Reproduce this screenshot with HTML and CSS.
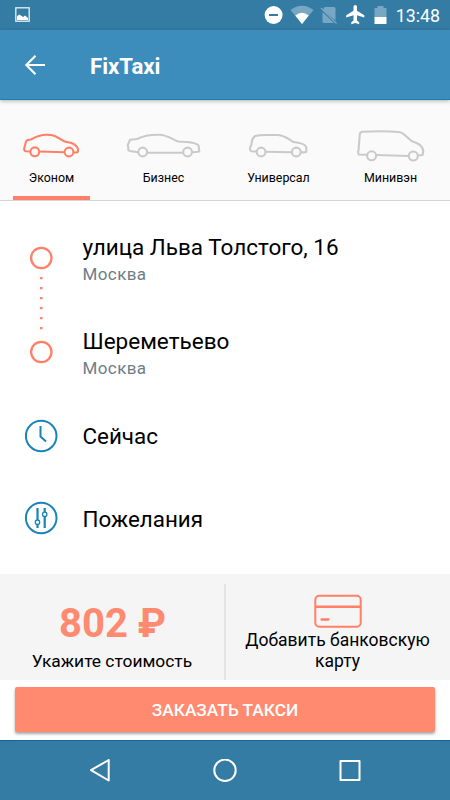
FILE: index.html
```html
<!DOCTYPE html>
<html lang="ru">
<head>
<meta charset="utf-8">
<title>FixTaxi</title>
<link rel="stylesheet" href="styles.css">
</head>
<body>
<div class="screen">
  <div class="status">
    <svg class="status-picture" viewBox="0 0 16 16"><rect x=".8" y=".8" width="13.4" height="13.4" fill="none" stroke="#e8f1f6" stroke-width="1.3"/><path d="M2 13V9.5L4 7.5L6 8.5L8 10L10 8.5L13 11V13Z" fill="#fff"/></svg>
    <svg class="status-icons" viewBox="262 0 128 30">
      <circle cx="273.6" cy="15" r="9" fill="#fff"/><path d="M269 15H278" stroke="#357ca5" stroke-width="2"/>
      <path d="M290.5 10Q302 1.500 313.500 10L302 24Z" fill="#78a7c3"/><path d="M295.300 15.500Q302 10 308.700 15.500L302 24Z" fill="#fff"/>
      <path d="M324.500 7H334Q335.500 7 335.500 8.500V20.500L323 10ZM322.500 12L334 23H324Q322.500 23 322.500 21.500Z" fill="#78a7c3"/><path d="M321 8L336.500 23.500" stroke="#78a7c3" stroke-width="1.300"/>
      <path d="M364.300 17.500V15.300L357 10.700V6.800A1.700 1.700 0 0 0 353.500 6.800V10.700L346.200 15.300V17.500L353.500 15.200V20.500L351.300 22.300V24.200L355.200 23L359.200 24.200V22.300L357 20.500V15.200Z" fill="#fff"/>
      <path d="M374.500 8H377.500V6H383.500V8H386.500V17H374.500Z" fill="#78a7c3"/><path d="M374.500 17H386.500V24H374.500Z" fill="#fff"/>
    </svg>
    <span class="time">13:48</span>
  </div>
  <header class="header">
    <svg class="back" viewBox="0 0 24 24"><path d="M22 12H3.500M12.500 2.800L3.300 12L12.500 21.200" fill="none" stroke="#fff" stroke-width="2.100"/></svg>
    <h1 class="title">FixTaxi</h1>
  </header>
  <nav class="tabs">
    <div class="tab tab-active">
      <svg class="car car-economy" viewBox="21 125 61 40"><path d="M30.300 151.500L26 151.300Q23.800 151 24.200 148.500L26 141.500Q26.500 139.700 31 139.500C36 136.500 40 134.600 47 134.700C54 134.700 57 137 63.500 141Q66 142 70.500 142.800Q76.500 144.500 78 149V151.500L77 152.500H73.300M39.300 151.500L64.500 152.200"/><circle cx="34.800" cy="151.800" r="4.400"/><circle cx="69" cy="152" r="4.400"/></svg>
      <span>Эконом</span>
    </div>
    <div class="tab">
      <svg class="car car-business" viewBox="125 125 77 40"><path d="M138.200 152.300L130 151Q127.500 150.500 128.500 148L127.700 145Q129 142.500 130 139.800L137 139C144 135.500 150 134.500 159 134.700C167 134.800 172 139 178 141.500Q196 142 198.500 145.500L199.300 151.500Q196 152.200 192 152.300M147.300 152.700H183"/><circle cx="142.700" cy="152" r="4.400"/><circle cx="187.600" cy="152" r="4.400"/></svg>
      <span>Бизнес</span>
    </div>
    <div class="tab">
      <svg class="car car-wagon" viewBox="247.700 125 62 40"><path d="M256.300 151.500L251 151.300Q249.300 150.500 249.800 147.500L251 145Q251.500 138 255 136Q259 135 265 135H277C284 135 287 138.500 293 142Q304 143 306 147V152Q304 152.500 300.500 152.300M265.200 151.700L291.500 152.300"/><circle cx="260.800" cy="152" r="4.400"/><circle cx="296" cy="152" r="4.400"/></svg>
      <span>Универсал</span>
    </div>
    <div class="tab">
      <svg class="car car-minivan" viewBox="355.400 125 71 40"><path d="M367.200 154.700L359 154.500Q357.800 152.500 359 149.500L360.200 134Q360.500 132 363 131.800Q383 130.500 399 132Q402 132 404.500 134.500L412 141Q421 144 422.500 147.500Q424.500 151 423 155L418.200 155.500M376.800 155L409.200 156"/><circle cx="372" cy="155.800" r="4.500"/><circle cx="413.700" cy="156" r="4.500"/></svg>
      <span>Минивэн</span>
    </div>
  </nav>
  <main class="main">
    <section class="route">
      <svg class="route-line" viewBox="0 0 24 118" fill="none" stroke="#ff8066"><circle cx="12.300" cy="12" r="10.200" stroke-width="2.300"/><circle cx="12.300" cy="106" r="10.200" stroke-width="2.300"/><path d="M12.200 31V84" stroke-width="2.600" stroke-dasharray="2.200 7.800"/></svg>
      <div class="stops">
        <div class="stop"><div class="place from">улица Льва Толстого, 16</div><div class="city">Москва</div></div>
        <div class="stop"><div class="place to">Шереметьево</div><div class="city">Москва</div></div>
      </div>
    </section>
    <div class="option">
      <svg class="option-icon" viewBox="0 0 34 34"><circle cx="17.200" cy="17" r="15.300"/><path d="M16.500 7V17.500L22 22.500"/></svg>
      <span class="now">Сейчас</span>
    </div>
    <div class="option">
      <svg class="option-icon" viewBox="0 0 34 34"><circle cx="17.200" cy="17" r="15.300"/><g stroke-width="2.200"><path d="M13.500 7V19M13.500 23.500V27M20.700 7V11M20.700 15.500V27"/></g><g stroke-width="1.300"><circle cx="13.500" cy="21.200" r="2.200"/><circle cx="20.700" cy="13.300" r="2.200"/></g></svg>
      <span class="wishes">Пожелания</span>
    </div>
  </main>
  <section class="payment">
    <div class="cost"><div class="price">802 ₽</div><div class="hint">Укажите стоимость</div></div>
    <div class="card">
      <svg class="card-icon" viewBox="0 0 48 34" fill="none" stroke="#ff8066" stroke-width="2"><rect x="1.300" y="1.800" width="45.400" height="31" rx="4"/><path d="M1.300 12.800H46.700" stroke-width="2.500"/><path d="M7.500 25.500H14.500" stroke-width="2.300" stroke-linecap="round"/></svg>
      <div class="card-text">Добавить банковскую<br>карту</div>
    </div>
  </section>
  <div class="action"><button class="order">ЗАКАЗАТЬ ТАКСИ</button></div>
  <nav class="system-nav">
    <svg viewBox="0 0 24 24"><path d="M20.700 1V21.500L3 11.200Z"/></svg>
    <svg viewBox="0 0 24 24"><circle cx="12" cy="11.300" r="10.700"/></svg>
    <svg viewBox="0 0 24 24"><rect x="2.500" y="2" width="19" height="19"/></svg>
  </nav>
</div>
</body>
</html>
```
FILE: styles.css
```css
* { box-sizing: border-box; }
body { margin: 0; font-family: Roboto, "Liberation Sans", sans-serif; color: #000; }
svg { display: block; flex: none; }
.screen { width: 450px; height: 800px; display: flex; flex-direction: column; background: #fff; overflow: hidden; }
.status { height: 30px; flex: none; display: flex; align-items: center; background: #357ca5; padding: 0 10px 0 15px; }
.status-picture { width: 16px; height: 16px; }
.status-icons { width: 128px; height: 30px; margin-left: auto; }
.time { width: 50px; text-align: right; color: #fff; font-size: 17.8px; font-weight: 400; line-height: 30px; white-space: nowrap; padding-top: 2px; }
.header { height: 70px; flex: none; display: flex; align-items: center; background: #3c8dbb; border-bottom: 1px solid #1680b2; box-shadow: 0 1px 4px rgba(0,0,0,.3); padding-left: 23px; z-index: 1; }
.back { width: 24px; height: 24px; }
.title { margin: 3px 0 0 43px; color: #fff; font-size: 22.2px; font-weight: 700; line-height: 30px; }
.tabs { height: 101px; flex: none; display: grid; grid-template-columns: 103px 121px 109px 115px; background: #fafafa; border-bottom: 1px solid #d5d5d5; }
.tab { display: flex; flex-direction: column; align-items: center; padding-top: 25px; font-size: 12.4px; line-height: 16px; }
.tab span { margin-top: 5px; }
.tab-active::after { content: ""; width: 77px; height: 4px; margin-top: 10px; background: #ff8066; }
.car { height: 40px; fill: none; stroke: #cacaca; stroke-width: 2.100; stroke-linejoin: round; }
.tab-active .car { stroke: #ff8066; }
.car-economy { width: 61px; }
.car-business { width: 77px; }
.car-wagon { width: 62px; }
.car-minivan { width: 71px; }
.main { height: 373px; flex: none; padding: 32px 24px 0; }
.route { display: flex; height: 162px; }
.route-line { width: 24px; height: 118px; margin: 13px 0 0 5px; }
.stops { margin-left: 29.5px; }
.stop { height: 94px; }
.place { font-size: 22.5px; line-height: 28px; white-space: nowrap; }
.city { color: #6e7d87; font-size: 17px; line-height: 22px; margin-top: 2px; letter-spacing: .4px; }
.option { display: flex; align-items: center; height: 82px; font-size: 22.4px; line-height: 28px; }
.option-icon { width: 34px; height: 34px; fill: none; stroke: #1a83b9; stroke-width: 2; }
.option span { margin: 0 0 0 24.5px; }
.option .wishes { margin-top: 1px; }
.payment { height: 106px; flex: none; display: grid; grid-template-columns: 224px 226px; background: #f5f5f5; text-align: center; }
.cost { padding-top: 29px; }
.price { color: #ff8a70; font-size: 40px; font-weight: 700; line-height: 42px; padding-left: 1px; }
.hint { font-size: 17.4px; line-height: 22px; margin-top: 5px; }
.card { margin-top: 10px; padding: 10px 1px 0 0; border-left: 2px solid #e4e4e4; }
.card-icon { width: 48px; height: 34px; margin: 0 auto; }
.card-text { font-size: 17.5px; line-height: 21px; margin-top: 2px; white-space: nowrap; }
.action { height: 60px; flex: none; padding: 7px 15px; }
.order { display: block; width: 420px; height: 45px; border: 0; border-radius: 2px; background: #ff8a70; box-shadow: 0 2px 3px rgba(0,0,0,.35); color: #fff; font: 500 17.3px/47px Roboto, sans-serif; padding: 0; }
.system-nav { height: 60px; flex: none; display: flex; align-items: center; justify-content: space-between; padding: 0 88px; background: #357ca5; border-top: 1px solid #0d6696; }
.system-nav svg { width: 24px; height: 24px; fill: none; stroke: #fff; stroke-width: 2; stroke-linejoin: round; }
```
